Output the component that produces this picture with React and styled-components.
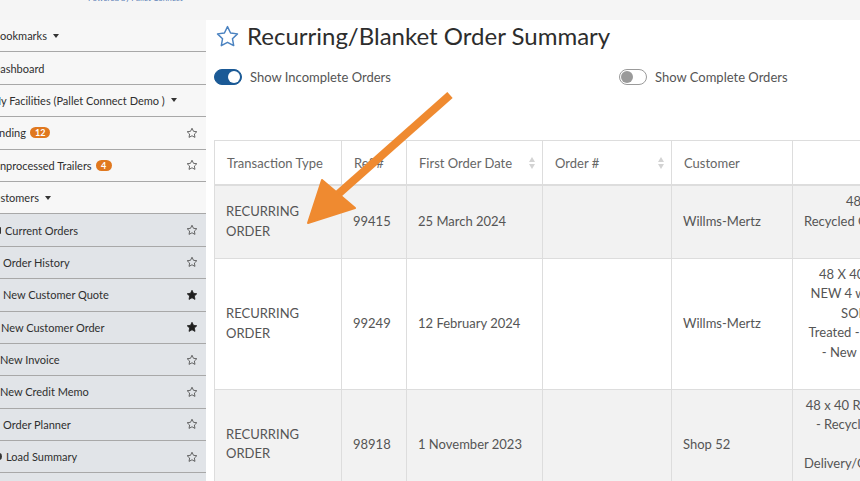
import React from "react";
import styled, { createGlobalStyle } from "styled-components";

const GlobalStyle = createGlobalStyle`
  html, body {
    margin: 0;
    padding: 0;
    background: #f5f5f5;
    font-family: Lato, "Open Sans", sans-serif;
    overflow: hidden;
  }
`;

const Page = styled.div`
  position: relative;
  width: 860px;
  height: 481px;
  overflow: hidden;
  display: flex;
  flex-direction: column;
`;

const TopStrip = styled.div`
  height: 20px;
  flex: none;
  padding-left: 88px;
  overflow: hidden;
`;

const Powered = styled.div`
  margin-top: -7px;
  font-size: 8px;
  line-height: 10px;
  color: #5b7fb5;
`;

const Body = styled.div`
  flex: 1;
  display: flex;
  min-height: 0;
`;

const Sidebar = styled.nav`
  width: 206px;
  flex: none;
  overflow: hidden;
`;

const Item = styled.div`
  height: 32.4px;
  box-sizing: border-box;
  border-bottom: 1px solid #a8a8a8;
  background: ${(p) => (p.$sub ? "#e1e4e8" : "#f7f7f7")};
  display: flex;
  align-items: center;
  padding-right: 8px;
  font-size: 11px;
  color: #2f2f2f;
  white-space: nowrap;
`;

const Label = styled.span`
  flex: 1;
  display: flex;
  align-items: center;
  margin-left: ${(p) => p.$shift}px;
`;

const Caret = styled.span`
  display: inline-block;
  margin-left: 6px;
  border-left: 3px solid transparent;
  border-right: 3px solid transparent;
  border-top: 4px solid #333;
`;

const Badge = styled.span`
  display: inline-block;
  margin-left: 4px;
  min-width: 8px;
  padding: 0 ${(p) => (p.$wide ? 5 : 4)}px;
  height: 11px;
  line-height: 11px;
  border-radius: 6px;
  background: #e0781f;
  color: #fff;
  font-size: 9px;
  font-weight: 700;
  text-align: center;
`;

const MiniIcon = styled.span`
  display: inline-block;
  width: 6px;
  height: 7px;
  margin-right: 4px;
  border-radius: ${(p) => (p.$round ? "50%" : "1px")};
  background: #333;
`;

const Main = styled.main`
  flex: 1;
  background: #fff;
  padding: 2px 0 0 8px;
  overflow: hidden;
`;

const TitleRow = styled.div`
  display: flex;
  align-items: center;
  gap: 7px;
  height: 28px;
  padding-left: 1px;
`;

const Title = styled.h1`
  margin: 0;
  font-size: 24px;
  font-weight: 400;
  color: #2d2d2d;
  line-height: 28px;
  white-space: nowrap;
`;

const ToggleRow = styled.div`
  display: flex;
  margin-top: 19px;
  height: 16px;
`;

const ToggleGroup = styled.label`
  width: 405px;
  flex: none;
  display: flex;
  align-items: center;
  gap: 8px;
  font-size: 13px;
  color: #555;
  white-space: nowrap;
`;

const Switch = styled.span`
  position: relative;
  width: 28px;
  height: 16px;
  box-sizing: border-box;
  border-radius: 8px;
  background: ${(p) => (p.$on ? "#1b5a96" : "#fff")};
  border: 1px solid ${(p) => (p.$on ? "#1b5a96" : "#9a9a9a")};
  &::after {
    content: "";
    position: absolute;
    top: 1px;
    left: ${(p) => (p.$on ? "13px" : "1px")};
    width: 12px;
    height: 12px;
    border-radius: 50%;
    background: ${(p) => (p.$on ? "#fff" : "#9a9a9a")};
  }
`;

const TableWrap = styled.div`
  margin-top: 55px;
  width: 900px;
`;

const Table = styled.table`
  border-collapse: collapse;
  table-layout: fixed;
  width: 770px;
  font-size: 13px;
  color: #555;
`;

const Th = styled.th`
  height: 43px;
  border: 1px solid #ddd;
  border-bottom: 2px solid #ddd;
  padding: 0 12px;
  text-align: left;
  font-weight: 400;
  color: #666;
  white-space: nowrap;
  position: relative;
`;

const Sort = styled.span`
  position: absolute;
  right: 7px;
  top: 50%;
  margin-top: -6px;
  display: flex;
  flex-direction: column;
  gap: 2px;
  &::before,
  &::after {
    content: "";
    border-left: 3.5px solid transparent;
    border-right: 3.5px solid transparent;
  }
  &::before {
    border-bottom: 5px solid #d3d3d3;
  }
  &::after {
    border-top: 5px solid #d3d3d3;
  }
`;

const Tr = styled.tr`
  height: ${(p) => (p.$h ? `${p.$h}px` : "auto")};
  background: ${(p) => (p.$alt ? "#f2f2f2" : "#fff")};
`;

const Td = styled.td`
  border: 1px solid #ddd;
  padding: 6px 11px;
  line-height: 19.5px;
  vertical-align: ${(p) => (p.$top ? "top" : "middle")};
  text-align: ${(p) => (p.$center ? "center" : "left")};
  white-space: nowrap;
  overflow: hidden;
`;

const Line = styled.div`
  height: 19.5px;
`;

const Arrow = styled.svg`
  position: absolute;
  left: 300px;
  top: 88px;
  pointer-events: none;
`;

const StarIcon = ({ size = 12, fill = "none", stroke = "#555", sw = 1.6 }) => (
  <svg width={size} height={size} viewBox="0 0 24 24">
    <path
      d="M12 2.5l2.95 6.1 6.65.9-4.85 4.62 1.2 6.63L12 17.56l-5.95 3.19 1.2-6.63L2.4 9.5l6.65-.9z"
      fill={fill}
      stroke={stroke}
      strokeWidth={sw}
      strokeLinejoin="round"
    />
  </svg>
);

const menu = [
  { label: "Bookmarks", shift: -7, caret: true },
  { label: "Dashboard", shift: -8 },
  { label: "My Facilities (Pallet Connect Demo )", shift: -9, caret: true },
  { label: "Pending", shift: -13, badge: "12", star: "o" },
  { label: "Unprocessed Trailers", shift: -8, badge: "4", star: "o" },
  { label: "Customers", shift: -13, caret: true },
  { label: "Current Orders", shift: -5, sub: true, icon: "sq", star: "o" },
  { label: "Order History", shift: 3, sub: true, star: "o" },
  { label: "New Customer Quote", shift: 3, sub: true, star: "f" },
  { label: "New Customer Order", shift: 1, sub: true, star: "f" },
  { label: "New Invoice", shift: 0, sub: true, star: "o" },
  { label: "New Credit Memo", shift: 0, sub: true, star: "o" },
  { label: "Order Planner", shift: 3, sub: true, star: "o" },
  { label: "Load Summary", shift: -4, sub: true, icon: "round", star: "o" },
  { label: "Load Planner", shift: 2, sub: true, star: "o" },
];

const rows = [
  {
    ref: "99415",
    date: "25 March 2024",
    customer: "Willms-Mertz",
    h: 73,
    desc: ["48 x 40 - GMA", "Recycled Grade A - 4 Way Std", ""],
  },
  {
    ref: "99249",
    date: "12 February 2024",
    customer: "Willms-Mertz",
    h: 131,
    desc: [
      "48 X 40 GMA Pallets - A",
      "NEW 4 way Stringer Pallets",
      "SOLID TOP - HT",
      "Treated - Stamped HT Pallet",
      "- New Pallets Delivered",
      "",
    ],
  },
  {
    ref: "98918",
    date: "1 November 2023",
    customer: "Shop 52",
    desc: [
      "48 x 40 Recycled #1 Grade B",
      "- Recycled Pallet Program",
      "",
      "Delivery/Collection Schedules",
      "Weekly",
    ],
  },
];

export default function App() {
  return (
    <Page>
      <GlobalStyle />
      <TopStrip>
        <Powered>Powered by Pallet Connect</Powered>
      </TopStrip>
      <Body>
        <Sidebar>
          {menu.map((m) => (
            <Item key={m.label} $sub={m.sub}>
              <Label $shift={m.shift}>
                {m.icon && <MiniIcon $round={m.icon === "round"} />}
                {m.label}
                {m.badge && <Badge $wide={m.badge.length > 1}>{m.badge}</Badge>}
                {m.caret && <Caret />}
              </Label>
              {m.star === "o" && <StarIcon stroke="#444" />}
              {m.star === "f" && <StarIcon fill="#1e1e1e" stroke="#1e1e1e" />}
            </Item>
          ))}
        </Sidebar>
        <Main>
          <TitleRow>
            <StarIcon size={25} stroke="#4a82c0" sw={1.4} />
            <Title>Recurring/Blanket Order Summary</Title>
          </TitleRow>
          <ToggleRow>
            <ToggleGroup>
              <Switch $on />
              Show Incomplete Orders
            </ToggleGroup>
            <ToggleGroup>
              <Switch />
              Show Complete Orders
            </ToggleGroup>
          </ToggleRow>
          <TableWrap>
            <Table>
              <colgroup>
                <col style={{ width: 127 }} />
                <col style={{ width: 65 }} />
                <col style={{ width: 136 }} />
                <col style={{ width: 129 }} />
                <col style={{ width: 121 }} />
                <col style={{ width: 192 }} />
              </colgroup>
              <thead>
                <tr>
                  <Th>Transaction Type</Th>
                  <Th>Ref #</Th>
                  <Th>
                    First Order Date
                    <Sort />
                  </Th>
                  <Th>
                    Order #
                    <Sort />
                  </Th>
                  <Th>Customer</Th>
                  <Th />
                </tr>
              </thead>
              <tbody>
                {rows.map((r, i) => (
                  <Tr key={r.ref} $alt={i % 2 === 0} $h={r.h}>
                    <Td>
                      RECURRING
                      <br />
                      ORDER
                    </Td>
                    <Td>{r.ref}</Td>
                    <Td>{r.date}</Td>
                    <Td />
                    <Td>{r.customer}</Td>
                    <Td $top $center>
                      {r.desc.map((d, j) => (
                        <Line key={j}>{d}</Line>
                      ))}
                    </Td>
                  </Tr>
                ))}
              </tbody>
            </Table>
          </TableWrap>
        </Main>
      </Body>
      <Arrow width="160" height="140" viewBox="0 0 160 140">
        <line x1="150" y1="7" x2="36" y2="108" stroke="#ef8a30" strokeWidth="8" />
        <polygon points="22,92 55,120 8,135" fill="#ef8a30" stroke="#ef8a30" strokeWidth="2" strokeLinejoin="round" />
      </Arrow>
    </Page>
  );
}
